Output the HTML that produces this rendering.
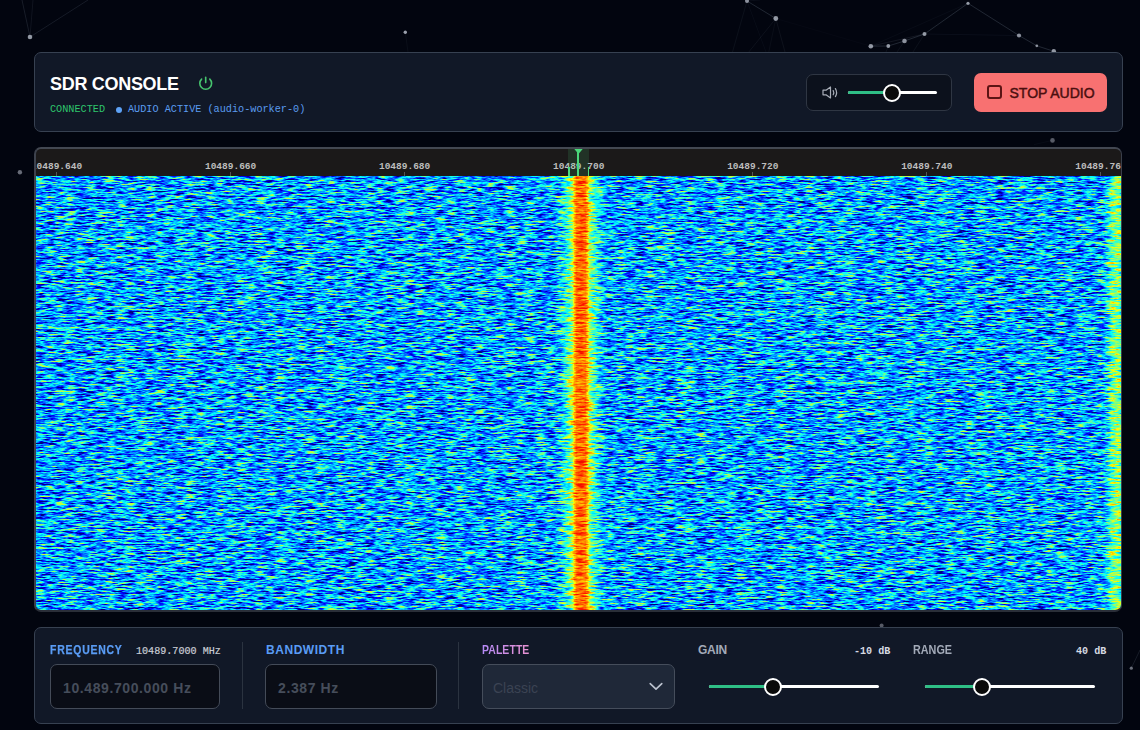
<!DOCTYPE html>
<html><head><meta charset="utf-8">
<style>
*{box-sizing:border-box;margin:0;padding:0}
html,body{width:1140px;height:730px;overflow:hidden;background:#02050f;font-family:"Liberation Sans",sans-serif;position:relative}
.abs{position:absolute}
#bg{position:absolute;left:0;top:0}
.panel{position:absolute;background:#111827;border:1px solid #374151;border-radius:7px}
.mono{font-family:"Liberation Mono",monospace}
.lbl{position:absolute;font-weight:bold;font-size:12px;letter-spacing:0.3px;line-height:1}
.inp{position:absolute;background:#0a0d16;border:1px solid #444b58;border-radius:7px}
.inp span{position:absolute;left:12px;top:15.5px;font-size:14px;font-weight:bold;color:#464d5b;line-height:1;letter-spacing:0.6px}
.sep{position:absolute;width:1px;background:#2b3340}
.track{position:absolute;height:3px;border-radius:2px;background:#ffffff}
.fill{position:absolute;left:0;top:0;height:3px;background:#2fbf86;border-radius:2px}
.thumb{position:absolute;width:18px;height:18px;border-radius:50%;background:#0a0a0a;border:2px solid #ffffff}
.tick{position:absolute;top:0;font-family:"Liberation Mono",monospace;font-weight:bold;font-size:9.3px;color:#bdbdbd;line-height:1}
.tk{position:absolute;top:13px;width:120px;text-align:center;font-family:"Liberation Mono",monospace;font-weight:bold;font-size:9.5px;color:#bdbdbd;line-height:1}
.tm{position:absolute;top:23px;width:1px;height:4px;background:#555}
</style></head>
<body>
<svg id="bg" width="1140" height="730" style="position:absolute;left:0;top:0"><line x1="30" y1="37" x2="22" y2="0" stroke="rgb(148,163,184)" stroke-opacity="0.154" stroke-width="1"/><line x1="30" y1="37" x2="33" y2="0" stroke="rgb(148,163,184)" stroke-opacity="0.098" stroke-width="1"/><line x1="30" y1="37" x2="88" y2="0" stroke="rgb(148,163,184)" stroke-opacity="0.140" stroke-width="1"/><line x1="405.3" y1="32.3" x2="408" y2="52" stroke="rgb(148,163,184)" stroke-opacity="0.056" stroke-width="1"/><line x1="747" y1="1" x2="775.8" y2="18.5" stroke="rgb(148,163,184)" stroke-opacity="0.210" stroke-width="1"/><line x1="747" y1="1" x2="732.5" y2="52" stroke="rgb(148,163,184)" stroke-opacity="0.070" stroke-width="1"/><line x1="747" y1="1" x2="766" y2="52" stroke="rgb(148,163,184)" stroke-opacity="0.049" stroke-width="1"/><line x1="747" y1="1" x2="760" y2="0" stroke="rgb(148,163,184)" stroke-opacity="0.056" stroke-width="1"/><line x1="775.8" y1="18.5" x2="748.8" y2="52" stroke="rgb(148,163,184)" stroke-opacity="0.077" stroke-width="1"/><line x1="775.8" y1="18.5" x2="768.8" y2="52" stroke="rgb(148,163,184)" stroke-opacity="0.056" stroke-width="1"/><line x1="775.8" y1="18.5" x2="785" y2="52" stroke="rgb(148,163,184)" stroke-opacity="0.077" stroke-width="1"/><line x1="775.8" y1="18.5" x2="870.8" y2="46.2" stroke="rgb(148,163,184)" stroke-opacity="0.028" stroke-width="1"/><line x1="870.8" y1="46.2" x2="888.3" y2="46" stroke="rgb(148,163,184)" stroke-opacity="0.210" stroke-width="1"/><line x1="888.3" y1="46" x2="904.5" y2="41" stroke="rgb(148,163,184)" stroke-opacity="0.210" stroke-width="1"/><line x1="904.5" y1="41" x2="924.5" y2="34" stroke="rgb(148,163,184)" stroke-opacity="0.210" stroke-width="1"/><line x1="870.8" y1="46.2" x2="924.5" y2="34" stroke="rgb(148,163,184)" stroke-opacity="0.105" stroke-width="1"/><line x1="924.5" y1="34" x2="968" y2="3.3" stroke="rgb(148,163,184)" stroke-opacity="0.210" stroke-width="1"/><line x1="870.8" y1="46.2" x2="968" y2="3.3" stroke="rgb(148,163,184)" stroke-opacity="0.042" stroke-width="1"/><line x1="968" y1="3.3" x2="1019" y2="35.5" stroke="rgb(148,163,184)" stroke-opacity="0.210" stroke-width="1"/><line x1="1019" y1="35.5" x2="1036.8" y2="45.8" stroke="rgb(148,163,184)" stroke-opacity="0.210" stroke-width="1"/><line x1="1036.8" y1="45.8" x2="1053.8" y2="51.3" stroke="rgb(148,163,184)" stroke-opacity="0.210" stroke-width="1"/><line x1="924.5" y1="34" x2="1019" y2="35.5" stroke="rgb(148,163,184)" stroke-opacity="0.063" stroke-width="1"/><line x1="904.5" y1="41" x2="897" y2="52" stroke="rgb(148,163,184)" stroke-opacity="0.070" stroke-width="1"/><line x1="924.5" y1="34" x2="913" y2="52" stroke="rgb(148,163,184)" stroke-opacity="0.070" stroke-width="1"/><line x1="888.3" y1="46" x2="886" y2="52" stroke="rgb(148,163,184)" stroke-opacity="0.070" stroke-width="1"/><line x1="1052.5" y1="140.4" x2="1034" y2="144.6" stroke="rgb(148,163,184)" stroke-opacity="0.042" stroke-width="1"/><line x1="1131.3" y1="668.2" x2="1140" y2="650" stroke="rgb(148,163,184)" stroke-opacity="0.140" stroke-width="1"/><circle cx="30" cy="37" r="2.3" fill="rgb(190,196,208)" fill-opacity="0.765"/><circle cx="405.3" cy="32.3" r="1.7" fill="rgb(190,196,208)" fill-opacity="0.810"/><circle cx="747" cy="1" r="2" fill="rgb(190,196,208)" fill-opacity="0.720"/><circle cx="775.8" cy="18.5" r="2.4" fill="rgb(190,196,208)" fill-opacity="0.765"/><circle cx="870.8" cy="46.2" r="2.3" fill="rgb(190,196,208)" fill-opacity="0.765"/><circle cx="888.3" cy="46" r="1.9" fill="rgb(190,196,208)" fill-opacity="0.765"/><circle cx="904.5" cy="41" r="2.3" fill="rgb(190,196,208)" fill-opacity="0.720"/><circle cx="924.5" cy="34" r="2" fill="rgb(190,196,208)" fill-opacity="0.765"/><circle cx="968" cy="3.3" r="1.6" fill="rgb(190,196,208)" fill-opacity="0.765"/><circle cx="1019" cy="35.5" r="2.1" fill="rgb(190,196,208)" fill-opacity="0.720"/><circle cx="1036.8" cy="45.8" r="1.4" fill="rgb(190,196,208)" fill-opacity="0.720"/><circle cx="1053.8" cy="51.3" r="2.2" fill="rgb(190,196,208)" fill-opacity="0.765"/><circle cx="19.9" cy="172.3" r="2.2" fill="rgb(190,196,208)" fill-opacity="0.540"/><circle cx="1052.5" cy="140.4" r="2.3" fill="rgb(190,196,208)" fill-opacity="0.450"/><circle cx="881.6" cy="625.5" r="2" fill="rgb(190,196,208)" fill-opacity="0.450"/><circle cx="1131.3" cy="668.2" r="1.6" fill="rgb(190,196,208)" fill-opacity="0.540"/></svg>

<!-- header -->
<div class="panel" style="left:34px;top:52px;width:1089px;height:80px"></div>
<div class="abs" style="left:50px;top:75px;font-size:18px;font-weight:bold;color:#fff;line-height:1;letter-spacing:-0.3px">SDR CONSOLE</div>
<svg class="abs" style="left:197px;top:76px" width="17" height="16" viewBox="0 0 17 16">
  <path d="M8.7 1.4 V6.6" stroke="#46c46e" stroke-width="1.6" stroke-linecap="round" fill="none"/>
  <path d="M4.6 3.1 A5.9 5.9 0 1 0 12.8 3.1" stroke="#46c46e" stroke-width="1.6" stroke-linecap="round" fill="none"/>
</svg>
<div class="abs mono" style="left:50px;top:105px;font-size:10.2px;color:#2ec66c;line-height:1">CONNECTED</div>
<div class="abs" style="left:116px;top:106.5px;width:6px;height:6px;border-radius:50%;background:#5ea2f6"></div>
<div class="abs mono" style="left:128px;top:105px;font-size:10.2px;color:#5b9cf0;line-height:1">AUDIO ACTIVE (audio-worker-0)</div>

<!-- volume -->
<div class="abs" style="left:806px;top:74px;width:146px;height:37px;background:#0c111c;border:1px solid #2f3643;border-radius:7px"></div>
<svg class="abs" style="left:821.8px;top:86px" width="17" height="13" viewBox="0 0 17 13">
  <path d="M1 4.2 H4 L8.5 1 V12 L4 8.8 H1 Z" stroke="#a9aeb8" stroke-width="1.2" fill="none" stroke-linejoin="round"/>
  <path d="M11.2 4.6 Q12.4 6.7 11.2 8.8" stroke="#a9aeb8" stroke-width="1.2" fill="none" stroke-linecap="round"/>
  <path d="M13.4 2.6 Q15.8 6.6 13.4 10.6" stroke="#a9aeb8" stroke-width="1.2" fill="none" stroke-linecap="round"/>
</svg>
<div class="track" style="left:848px;top:91px;width:89px"><div class="fill" style="width:44px"></div></div>
<div class="thumb" style="left:883px;top:84px"></div>

<!-- stop button -->
<div class="abs" style="left:974px;top:73px;width:133px;height:39px;background:#f87171;border-radius:7px"></div>
<div class="abs" style="left:987px;top:85px;width:15px;height:14px;border:2px solid #5c1414;border-radius:3px"></div>
<div class="abs" style="left:1009.5px;top:86px;font-size:14px;color:#4a0f0f;line-height:1;-webkit-text-stroke:0.45px #4a0f0f">STOP AUDIO</div>

<!-- waterfall panel -->
<div class="abs" style="left:34px;top:147px;width:1088px;height:465px;border-style:solid;border-width:2px 1.5px 2px 2px;border-color:#434852 #3a3f4a #2a2e38 #3d424d;border-radius:7px;background:#1b1919;overflow:hidden">
<div class="abs" style="left:0;top:0;width:1085px;height:27px"><div class="tk" style="left:-39.5px">10489.640</div><div class="tm" style="left:20.0px"></div><div class="tk" style="left:134.6px">10489.660</div><div class="tm" style="left:194.1px"></div><div class="tk" style="left:308.6px">10489.680</div><div class="tm" style="left:368.1px"></div><div class="tk" style="left:482.7px">10489.700</div><div class="tm" style="left:542.2px"></div><div class="tk" style="left:656.8px">10489.720</div><div class="tm" style="left:716.3px"></div><div class="tk" style="left:830.8px">10489.740</div><div class="tm" style="left:890.3px"></div><div class="tk" style="left:1004.9px">10489.760</div><div class="tm" style="left:1064.4px"></div>
<div class="abs" style="left:532px;top:0;width:21px;height:27px;background:rgba(74,222,128,0.13)"></div>
<div class="abs" style="left:541.3px;top:2px;width:1.7px;height:25px;background:#4ad77a"></div>
<div class="abs" style="left:532.3px;top:18px;width:1.5px;height:9px;background:#4ad77a"></div>
<div class="abs" style="left:551.5px;top:18px;width:1.5px;height:9px;background:#4ad77a"></div>
<svg class="abs" style="left:538px;top:0px" width="9" height="7"><path d="M0.3 0 H8.7 L4.5 5 Z" fill="#4ad77a"/></svg>
</div>
<div class="abs" style="left:0;top:27px;width:1085px;height:434px;overflow:hidden"><svg width="1085" height="434" viewBox="0 0 1085 434" style="position:absolute;left:0;top:0;display:block">
<defs>
<linearGradient id="prof" x1="0" x2="1" y1="0" y2="0"><stop offset="0" stop-color="rgb(0,0,0)"/><stop offset="0.478341" stop-color="rgb(0,0,0)"/><stop offset="0.483871" stop-color="rgb(17,17,17)"/><stop offset="0.488479" stop-color="rgb(40,40,40)"/><stop offset="0.492166" stop-color="rgb(66,66,66)"/><stop offset="0.49447" stop-color="rgb(91,91,91)"/><stop offset="0.496313" stop-color="rgb(137,137,137)"/><stop offset="0.498157" stop-color="rgb(163,163,163)"/><stop offset="0.502304" stop-color="rgb(170,170,170)"/><stop offset="0.506452" stop-color="rgb(163,163,163)"/><stop offset="0.508295" stop-color="rgb(137,137,137)"/><stop offset="0.510138" stop-color="rgb(91,91,91)"/><stop offset="0.512442" stop-color="rgb(66,66,66)"/><stop offset="0.516129" stop-color="rgb(40,40,40)"/><stop offset="0.520737" stop-color="rgb(17,17,17)"/><stop offset="0.526267" stop-color="rgb(0,0,0)"/><stop offset="0.98341" stop-color="rgb(0,0,0)"/><stop offset="0.988018" stop-color="rgb(25,25,25)"/><stop offset="0.991705" stop-color="rgb(66,66,66)"/><stop offset="0.997235" stop-color="rgb(76,76,76)"/><stop offset="1" stop-color="rgb(56,56,56)"/></linearGradient>
<filter id="wff" x="0" y="0" width="1" height="1" color-interpolation-filters="sRGB">
<feTurbulence type="fractalNoise" baseFrequency="0.1 0.6" numOctaves="3" seed="7" result="nh"/>
<feTurbulence type="fractalNoise" baseFrequency="0.05 0.2" numOctaves="2" seed="11" result="nl"/>
<feColorMatrix in="nh" type="matrix" values="1 0 0 0 0 1 0 0 0 0 1 0 0 0 0 0 0 0 0 1" result="nh1"/>
<feColorMatrix in="nl" type="matrix" values="1 0 0 0 0 1 0 0 0 0 1 0 0 0 0 0 0 0 0 1" result="nl1"/>
<feComposite in="nh1" in2="nl1" operator="arithmetic" k1="0" k2="0.75" k3="0.25" k4="0" result="n"/>
<feColorMatrix in="n" type="matrix" values="2.5 0 0 0 -0.75 2.5 0 0 0 -0.75 2.5 0 0 0 -0.75 0 0 0 0 1" result="g0"/>
<feComponentTransfer in="g0" result="g"><feFuncR type="gamma" amplitude="0.51" exponent="1.15" offset="0.055"/><feFuncG type="gamma" amplitude="0.51" exponent="1.15" offset="0.055"/><feFuncB type="gamma" amplitude="0.51" exponent="1.15" offset="0.055"/></feComponentTransfer>
<feColorMatrix in="SourceGraphic" type="matrix" values="-0.8 0 0 0 1 -0.8 0 0 0 1 -0.8 0 0 0 1 0 0 0 0 1" result="mask"/>
<feComposite in="g" in2="mask" operator="arithmetic" k1="1" k2="0" k3="0" k4="0" result="gm"/>
<feComposite in="gm" in2="SourceGraphic" operator="arithmetic" k1="0" k2="1" k3="1" k4="0" result="v"/>
<feComponentTransfer in="v">
<feFuncR type="table" tableValues="0 0 0 0 0 0 0 0 0 0 0 0 0 0.125 0.25 0.375 0.5 0.625 0.75 0.875 1 1 1 1 1 1 1 1 1 0.963 0.925 0.887 0.85"/>
<feFuncG type="table" tableValues="0 0 0 0 0 0.125 0.25 0.375 0.5 0.625 0.75 0.875 1 1 1 1 1 1 1 1 1 0.887 0.775 0.662 0.55 0.438 0.325 0.213 0.1 0.075 0.05 0.025 0"/>
<feFuncB type="table" tableValues="0.12 0.335 0.55 0.775 1 1 1 1 1 1 1 1 1 0.875 0.75 0.625 0.5 0.375 0.25 0.125 0 0 0 0 0 0 0 0 0 0 0 0 0"/>
</feComponentTransfer>
</filter>
</defs>
<rect width="1085" height="434" fill="url(#prof)" filter="url(#wff)"/>
</svg></div>
</div>
<!-- bottom panel -->
<div class="panel" style="left:34px;top:627px;width:1089px;height:97px"></div>
<div class="lbl" style="left:50px;top:644px;color:#5a9cf5;letter-spacing:0.9px;transform:scaleX(0.87);transform-origin:0 0;-webkit-text-stroke:0.25px #5a9cf5">FREQUENCY</div>
<div class="abs mono" style="left:136px;top:646.5px;font-size:10.1px;color:#c8ccd4;-webkit-text-stroke:0.2px #c8ccd4;line-height:1">10489.7000 MHz</div>
<div class="inp" style="left:50px;top:664px;width:170px;height:45px"><span>10.489.700.000 Hz</span></div>
<div class="sep" style="left:242px;top:642px;height:67px"></div>
<div class="lbl" style="left:266px;top:644px;color:#5a9cf5;letter-spacing:0.55px">BANDWIDTH</div>
<div class="inp" style="left:265px;top:664px;width:172px;height:45px"><span>2.387 Hz</span></div>
<div class="sep" style="left:458px;top:642px;height:67px"></div>
<div class="lbl" style="left:482px;top:644px;color:#c084fc;letter-spacing:0.1px;transform:scaleX(0.87);transform-origin:0 0;background:linear-gradient(90deg,#b58af7,#e892d2);-webkit-background-clip:text;background-clip:text;-webkit-text-fill-color:transparent">PALETTE</div>
<div class="abs" style="left:482px;top:664px;width:193px;height:45px;background:#1f2838;border:1px solid #454d5b;border-radius:7px">
  <span class="abs" style="left:10px;top:16px;font-size:14px;color:#3b4353;line-height:1">Classic</span>
  <svg class="abs" style="left:166px;top:17px" width="15" height="10" viewBox="0 0 15 10"><path d="M1.2 1.6 L7 7.2 L12.8 1.6" stroke="#bcc3cf" stroke-width="1.6" fill="none" stroke-linecap="round" stroke-linejoin="round"/></svg>
</div>
<div class="lbl" style="left:698px;top:644px;color:#a3aab8;letter-spacing:-0.3px">GAIN</div>
<div class="abs mono" style="left:854px;top:646.5px;font-size:10.1px;color:#d6dae2;font-weight:bold;line-height:1">-10 dB</div>
<div class="track" style="left:709px;top:685px;width:170px"><div class="fill" style="width:64px"></div></div>
<div class="thumb" style="left:764px;top:678px"></div>
<div class="lbl" style="left:913px;top:644px;color:#a3aab8;letter-spacing:0px;transform:scaleX(0.9);transform-origin:0 0">RANGE</div>
<div class="abs mono" style="left:1076px;top:646.5px;font-size:10.1px;color:#d6dae2;font-weight:bold;line-height:1">40 dB</div>
<div class="track" style="left:925px;top:685px;width:170px"><div class="fill" style="width:57px"></div></div>
<div class="thumb" style="left:973px;top:678px"></div>
</body></html>
